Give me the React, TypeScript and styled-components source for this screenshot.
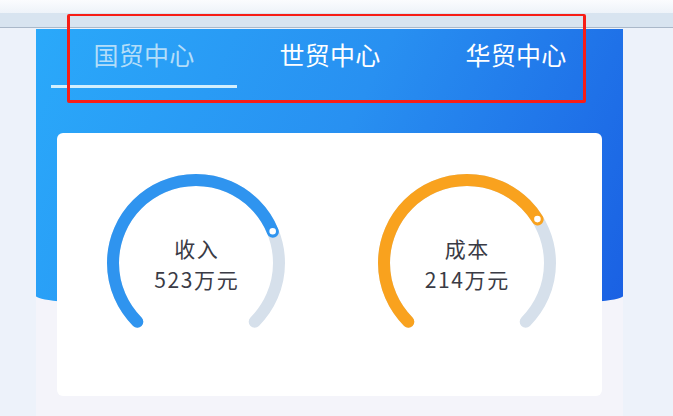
import styled, { createGlobalStyle } from 'styled-components'

const GlobalStyle = createGlobalStyle`
  * {
    box-sizing: border-box;
  }

  body {
    margin: 0;
    background: #edf2fa;
    font-family: "Noto Sans CJK SC", "Noto Sans", sans-serif;
  }
`

type GaugeData = {
  label: string
  value: string
  percent: number
  color: string
}

const gauges: GaugeData[] = [
  { label: '收入', value: '523万元', percent: 0.75, color: '#2f94ef' },
  { label: '成本', value: '214万元', percent: 0.715, color: '#f9a21e' },
]

const tabs = ['国贸中心', '世贸中心', '华贸中心']

const SIZE = 190
const C = SIZE / 2
const R = 83
const ARC = 2 * Math.PI * R * 0.75

const point = (deg: number) => {
  const rad = (deg * Math.PI) / 180
  return { x: C + R * Math.cos(rad), y: C + R * Math.sin(rad) }
}

const Gauge = ({ label, value, percent, color }: GaugeData) => {
  const start = point(135)
  const end = point(45)
  const dot = point(135 + 270 * percent)
  const d = `M ${start.x} ${start.y} A ${R} ${R} 0 1 1 ${end.x} ${end.y}`

  return (
    <GaugeBox>
      <svg width={SIZE} height={SIZE} viewBox={`0 0 ${SIZE} ${SIZE}`}>
        <path d={d} fill="none" stroke="#d6e0eb" strokeWidth={12} strokeLinecap="round" />
        <path
          d={d}
          fill="none"
          stroke={color}
          strokeWidth={12}
          strokeLinecap="round"
          strokeDasharray={`${ARC * percent} ${ARC}`}
        />
        <circle cx={dot.x} cy={dot.y} r={4.4} fill="#fff" stroke={color} strokeWidth={2.2} />
      </svg>
      <GaugeText>
        <Line>{label}</Line>
        <Line>{value}</Line>
      </GaugeText>
    </GaugeBox>
  )
}

const App = () => {
  return (
    <>
      <GlobalStyle />
      <Page>
        <BrowserBar>
          <BarTop />
          <BarBottom />
        </BrowserBar>
        <Phone>
          <Header>
            <Tabs>
              {tabs.map((t, i) => (
                <Tab key={t} $active={i === 0}>
                  {t}
                </Tab>
              ))}
            </Tabs>
            <Card>
              {gauges.map((g) => (
                <Gauge key={g.label} {...g} />
              ))}
            </Card>
          </Header>
        </Phone>
        <Highlight />
      </Page>
    </>
  )
}

const Page = styled.div`
  position: relative;
  width: 673px;
  height: 416px;
  overflow: hidden;
`

const BrowserBar = styled.div`
  height: 28px;
  border-bottom: 1px solid #aab8c9;
  display: flex;
  flex-direction: column;
`

const BarTop = styled.div`
  height: 13px;
  background: linear-gradient(180deg, #fbfcfe 0%, #eef3f9 100%);
`

const BarBottom = styled.div`
  flex: 1;
  background: #d8e4f0;
`

const Phone = styled.div`
  margin: 1px 0 0 36px;
  width: 587px;
  height: 387px;
  background: #f4f4fa;
`

const Header = styled.div`
  height: 281px;
  padding: 0 14px 0 0;
  background: linear-gradient(115deg, #2aa9fa 0%, #2890f1 50%, #1a60e3 100%);
  border-radius: 0 0 50% 50% / 0 0 14px 14px;
`

const Tabs = styled.div`
  display: flex;
  padding-left: 15px;
`

const Tab = styled.div<{ $active: boolean }>`
  width: 186px;
  height: 59px;
  padding-bottom: 6px;
  display: flex;
  align-items: center;
  justify-content: center;
  font-size: 25px;
  letter-spacing: 0.3px;
  color: ${(p) => (p.$active ? '#b3ddf9' : '#ffffff')};
  border-bottom: 3px solid ${(p) => (p.$active ? '#d2effd' : 'transparent')};
`

const Card = styled.div`
  margin: 45px 0 0 21px;
  width: 545px;
  height: 263px;
  padding: 0 0 3px 4px;
  background: #ffffff;
  border-radius: 6px;
  display: grid;
  grid-template-columns: 1fr 1fr;
  align-items: center;
  justify-items: center;
`

const GaugeBox = styled.div`
  display: grid;
  place-items: center;

  & > * {
    grid-area: 1 / 1;
  }
`

const GaugeText = styled.div`
  display: flex;
  flex-direction: column;
  align-items: center;
  padding: 2px 0 0 1px;
  color: #3a3b45;
`

const Line = styled.span`
  font-size: 21px;
  line-height: 31px;
  letter-spacing: 1.6px;
`

const Highlight = styled.div`
  position: absolute;
  left: 67px;
  top: 14px;
  width: 519px;
  height: 89px;
  border: 3px solid #f71d16;
  border-top-width: 2px;
  border-radius: 2px;
`

export default App
